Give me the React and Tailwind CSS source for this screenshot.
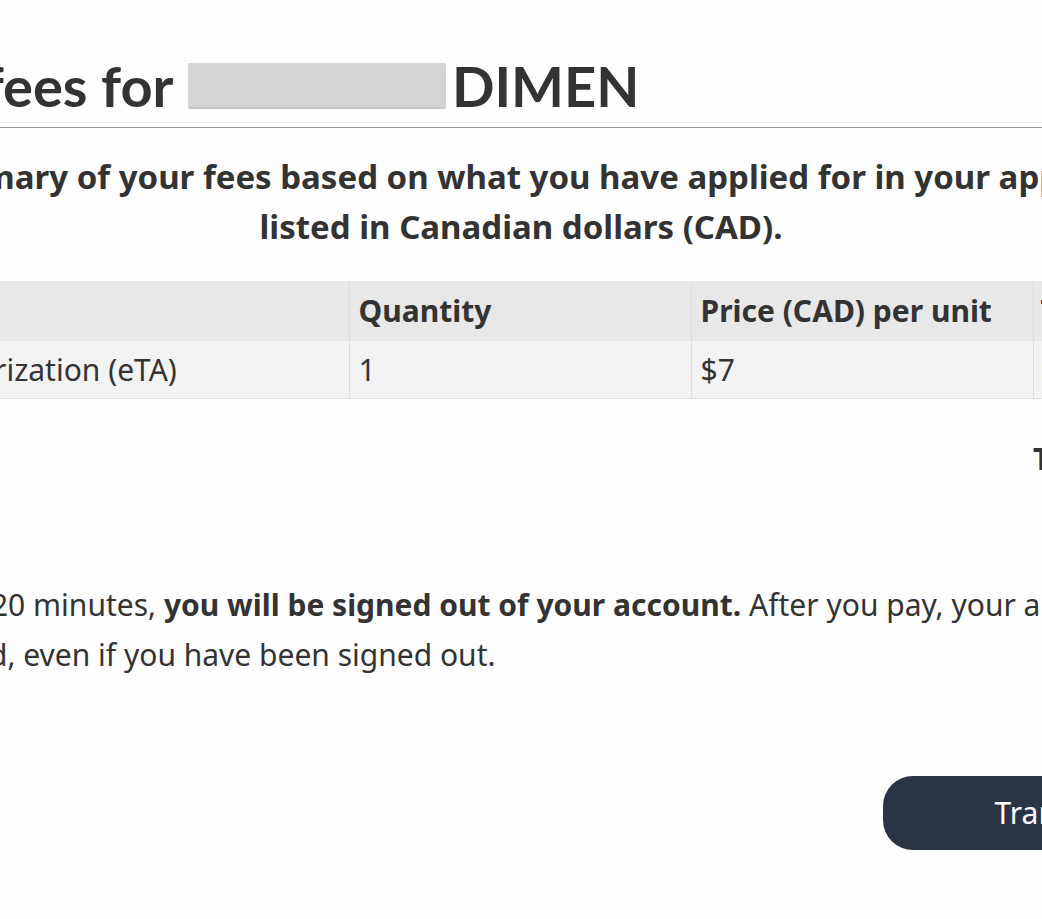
import React from "react";

const rows = [
  { item: "Electronic travel authorization (eTA)", qty: "1", price: "$7", total: "$7" },
];

export default function App() {
  return (
    <div
      className="h-[919px] w-full overflow-hidden bg-[#fefefe] flex justify-center text-[#333]"
      style={{ fontFamily: '"Noto Sans", "Open Sans", sans-serif' }}
    >
      <div className="w-[1742px] shrink-0">
        {/* Title */}
        <div className="pt-[52px]">
          <h1
            className="ml-[23px] text-[56px] leading-[67px] font-bold flex items-center whitespace-nowrap"
            style={{ fontFamily: 'Lato, "Noto Sans", sans-serif' }}
          >
            <span>Summary of fees for&nbsp;</span>
            <span className="inline-block w-[258px] h-[46px] ml-[2px] bg-[#d4d4d4] border-b-2 border-[#c6c6c6] mr-[6px] rounded-[2px]" />
            <span>DIMEN</span>
          </h1>
          <div className="mt-[3px] h-px bg-[#e4e4e4]" />
          <div className="mt-[4px] h-px bg-[#9c9c9c]" />
        </div>

        {/* Intro */}
        <p className="mt-[24px] text-center text-[33px] leading-[50px] font-bold whitespace-nowrap">
          Below is the summary of your fees based on what you have applied for in your application. Fees are
          <br />
          listed in Canadian dollars (CAD).
        </p>

        {/* Fees table */}
        <table className="mt-[29px] w-full table-fixed border-collapse text-[30px]">
          <colgroup>
            <col className="w-[699px]" />
            <col className="w-[342px]" />
            <col className="w-[342px]" />
            <col className="w-[359px]" />
          </colgroup>
          <thead>
            <tr className="bg-[#e8e8e8] h-[59px] text-left">
              <th className="pl-[29px] pr-[9px] font-bold border-r border-[#dddddd]">Item</th>
              <th className="px-[9px] font-bold border-r border-[#dddddd]">Quantity</th>
              <th className="px-[9px] font-bold border-r border-[#dddddd]">Price (CAD) per unit</th>
              <th className="pl-[7px] pr-[9px] font-bold">Total (CAD)</th>
            </tr>
          </thead>
          <tbody>
            {rows.map((r, i) => (
              <tr key={i} className="bg-[#f3f3f3] h-[58px] border-t border-b border-[#e2e2e2]">
                <td className="pl-[29px] pr-[9px] border-r border-[#dddddd] whitespace-nowrap">{r.item}</td>
                <td className="px-[9px] border-r border-[#dddddd]">{r.qty}</td>
                <td className="px-[9px] border-r border-[#dddddd]">{r.price}</td>
                <td className="pl-[7px] pr-[9px]">{r.total}</td>
              </tr>
            ))}
          </tbody>
        </table>

        {/* Total */}
        <div className="mt-[40px] flex text-[30px] leading-[40px] font-bold">
          <div className="w-[1383px] shrink-0" />
          <div>Total: $7</div>
        </div>

        {/* Notice */}
        <p className="mt-[101px] text-[30px] leading-[50px] whitespace-nowrap">
          If you do not pay within 20 minutes, <span className="font-bold">you will be signed out of your account.</span> After you pay, your application will be
          <br />
          submitted and processed, even if you have been signed out.
        </p>

        {/* Action */}
        <div className="mt-[96px] flex justify-end">
          <button className="w-[509px] h-[74px] rounded-[30px] bg-[#2b3445] text-white text-[30px]">
            Transfer to payment
          </button>
        </div>
      </div>
    </div>
  );
}
